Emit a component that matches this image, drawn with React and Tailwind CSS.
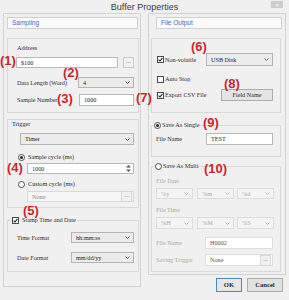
import clsx from "clsx";

const sans = "font-['Liberation_Sans',Arial,sans-serif]";

function Chevron({ color = "#555" }) {
  return (
    <svg width="5" height="3" viewBox="0 0 5 3" className="shrink-0">
      <path d="M0.5 0.5L2.5 2.5L4.5 0.5" fill="none" stroke={color} strokeWidth="0.9" />
    </svg>
  );
}

function Select({ value, className, disabled }) {
  return (
    <div
      className={clsx(
        "flex items-center justify-between border pl-[4px] pr-[3px]",
        disabled ? "border-[#dcdcdc] bg-[#f4f4f4] text-[#a8a8a8]" : "border-[#b4b4b4] bg-[#ebebeb] text-[#222]",
        className
      )}
    >
      <span>{value}</span>
      <Chevron color={disabled ? "#b4b4b4" : "#555"} />
    </div>
  );
}

function Dots({ className }) {
  return (
    <span
      className={clsx(
        "flex h-[11px] w-[11px] shrink-0 items-start justify-center border border-[#c9c9c9] bg-[#f1f1f1] text-[6px] leading-[7px] text-[#777]",
        className
      )}
    >
      ...
    </span>
  );
}

function Field({ value, className, muted, dots }) {
  return (
    <div
      className={clsx(
        "flex items-center justify-between border pl-[4px]",
        muted ? "border-[#d9d9d9] bg-[#f6f6f6] text-[#8c8c8c]" : "border-[#b9b9b9] bg-white text-[#222]",
        className
      )}
    >
      <span>{value}</span>
      {dots && <Dots className="mr-[1px] h-[9px] w-[9px] border-[#d6d6d6]" />}
    </div>
  );
}

function Check({ checked }) {
  return (
    <span className="flex h-[7px] w-[7px] shrink-0 items-center justify-center border border-[#4a4a4a] bg-white">
      {checked && (
        <svg width="5" height="5" viewBox="0 0 5 5">
          <path d="M0.6 2.6L2 4L4.4 0.8" fill="none" stroke="#222" strokeWidth="1.1" />
        </svg>
      )}
    </span>
  );
}

function Radio({ checked }) {
  return (
    <span className="flex h-[7px] w-[7px] shrink-0 items-center justify-center rounded-full border border-[#4a4a4a] bg-white">
      {checked && <span className="h-[3px] w-[3px] rounded-full bg-[#222]" />}
    </span>
  );
}

function Header({ children, className }) {
  return (
    <div
      className={clsx(
        "flex h-[12px] items-center border border-[#d0d0d0] bg-[#fbfbfb] pl-[4px] text-[6.5px] text-[#3d6bb5]",
        sans,
        className
      )}
    >
      {children}
    </div>
  );
}

function Tag({ n, className }) {
  return (
    <span
      className={clsx(
        "absolute text-[13px] font-bold leading-[13px] text-[#c8282d]",
        sans,
        className
      )}
    >
      ({n})
    </span>
  );
}

export default function App() {
  return (
    <div className="relative h-[300px] w-[289px] overflow-hidden bg-[#f0f0f0] font-['Liberation_Serif',serif] text-[6.2px] leading-[8px] text-[#2a2a2a]">
      {/* title bar */}
      <div className={clsx("relative flex h-[13px] items-center justify-center text-[9px] text-[#3a3a3a]", sans)}>
        Buffer Properties
        <span className="absolute right-[6px] top-[1px] flex h-[7px] w-[12px] items-center justify-center bg-[#cdcdcd] text-[6px] leading-none text-white">
          ×
        </span>
      </div>

      <div className="flex pl-[3px]">
        {/* Sampling */}
        <div className="h-[274px] w-[138px] border border-[#d2d2d2] px-[3px] pt-[3px]">
          <Header className="w-[131px]">Sampling</Header>

          <div className="mt-[9px] h-[75px] w-[132px] border border-[#d8d8d8] pl-[8px] pt-[5px]">
            <div className="ml-[1px] h-[8px]">Address</div>
            <div className="mt-[5px] flex h-[11px] items-center">
              <Field value="$100" className="h-[11px] w-[102px]" />
              <Dots className="ml-[5px]" />
            </div>
            <div className="mt-[9px] flex h-[11px] items-center">
              <span className="ml-[1px] w-[61px]">Data Length (Word)</span>
              <Select value="4" className="h-[11px] w-[56px]" />
            </div>
            <div className="mt-[6px] flex h-[12px] items-center">
              <span className="ml-[1px] w-[62px]">Sample Number</span>
              <Field value="1000" className="h-[12px] w-[55px]" />
            </div>
          </div>

          <div className="mt-[6px] h-[89px] w-[132px] border border-[#d8d8d8]">
            <div className="ml-[4px] h-[8px]">Trigger</div>
            <Select value="Timer" className="ml-[12px] mt-[5px] h-[12px] w-[114px]" />
            <div className="ml-[10px] mt-[8px] flex h-[8px] items-center gap-[3px]">
              <Radio checked />
              <span>Sample cycle (ms)</span>
            </div>
            <div className="ml-[19px] mt-[2px] flex h-[11px] w-[107px] items-center justify-between border border-[#b9b9b9] bg-white pl-[4px]">
              <span>1000</span>
              <svg width="7" height="9" viewBox="0 0 7 9" className="mr-[1px]">
                <path d="M3.5 1L6 3.5H1Z" fill="#555" />
                <path d="M3.5 8L6 5.5H1Z" fill="#555" />
              </svg>
            </div>
            <div className="ml-[10px] mt-[6px] flex h-[8px] items-center gap-[3px]">
              <Radio />
              <span>Custom cycle (ms)</span>
            </div>
            <Field value="None" muted dots className="ml-[19px] mt-[3px] h-[11px] w-[107px]" />
          </div>

          <fieldset className="mt-[8px] w-[132px] border border-[#d8d8d8] pb-[8px]">
            <legend className="ml-[4px] flex h-[8px] items-center gap-[3px] pr-[1px]">
              <Check checked />
              <span>Stamp Time and Date</span>
            </legend>
            <div className="mt-[8px] flex h-[11px] items-center">
              <span className="ml-[9px] w-[54px]">Time Format</span>
              <Select value="hh:mm:ss" className="h-[11px] w-[63px]" />
            </div>
            <div className="mt-[9px] flex h-[11px] items-center">
              <span className="ml-[9px] w-[54px]">Date Format</span>
              <Select value="mm/dd/yy" className="h-[11px] w-[63px]" />
            </div>
          </fieldset>
        </div>

        {/* File Output */}
        <div className="ml-[7px] w-[138px]">
          <div className="h-[262px] border border-[#d2d2d2] pt-[3px]">
            <Header className="ml-[7px] w-[126px]">File Output</Header>

            <div className="ml-[2px] mt-[9px] h-[75px] w-[130px] border border-[#d8d8d8] pl-[5px]">
              <div className="mt-[14px] flex h-[13px] items-center">
                <Check checked />
                <span className="ml-[1px] w-[41px]">Non-volatile</span>
                <Select value="USB Disk" className="h-[13px] w-[67px]" />
              </div>
              <div className="mt-[9px] flex h-[8px] items-center">
                <Check />
                <span className="ml-[1px]">Auto Stop</span>
              </div>
              <div className="mt-[6px] flex h-[12px] items-center">
                <Check checked />
                <span className="ml-[1px] w-[56px]">Export CSV File</span>
                <span className="flex h-[12px] w-[52px] items-center justify-center border border-[#adadad] bg-[#e4e4e4]">
                  Field Name
                </span>
              </div>
            </div>

            <fieldset className="ml-[2px] mt-[8px] w-[130px] border border-[#d8d8d8] pb-[11px]">
              <legend className="ml-[2px] flex h-[8px] items-center gap-[1px] pr-[1px]">
                <Radio checked />
                <span>Save As Single</span>
              </legend>
              <div className="mt-[4px] flex h-[12px] items-center">
                <span className="ml-[4px] w-[50px]">File Name</span>
                <Field value="TEST" className="h-[12px] w-[67px]" />
              </div>
            </fieldset>

            <fieldset className="ml-[2px] mt-[5px] w-[130px] border border-[#d8d8d8] pb-[5px]">
              <legend className="ml-[3px] flex h-[8px] items-center gap-[1px] pr-[1px]">
                <Radio />
                <span>Save As Multi</span>
              </legend>
              <div className="ml-[4px] mt-[7px] h-[8px] text-[#aaaaaa]">File Date</div>
              <div className="ml-[4px] mt-[3px] flex h-[11px]">
                <Select disabled value="%y" className="h-[11px] w-[37px]" />
                <Select disabled value="%m" className="ml-[4px] h-[11px] w-[37px]" />
                <Select disabled value="%d" className="ml-[3px] h-[11px] w-[37px]" />
              </div>
              <div className="ml-[4px] mt-[7px] h-[8px] text-[#aaaaaa]">File Time</div>
              <div className="ml-[4px] mt-[3px] flex h-[12px]">
                <Select disabled value="%H" className="h-[12px] w-[37px]" />
                <Select disabled value="%M" className="ml-[4px] h-[12px] w-[37px]" />
                <Select disabled value="%S" className="ml-[3px] h-[12px] w-[37px]" />
              </div>
              <div className="mt-[8px] flex h-[12px] items-center">
                <span className="ml-[4px] w-[49px] text-[#aaaaaa]">File Name</span>
                <Field value="H0002" className="h-[12px] w-[68px] border-[#dedede] bg-[#f8f8f8] text-[#555]" />
              </div>
              <div className="mt-[5px] flex h-[12px] items-center">
                <span className="ml-[4px] w-[49px] text-[#aaaaaa]">Saving Trigger</span>
                <Field value="None" dots className="h-[12px] w-[68px] border-[#dedede] bg-[#f8f8f8] text-[#555]" />
              </div>
            </fieldset>
          </div>

          <div className="mt-[3px] flex justify-end gap-[5px] pr-[3px] text-[6.6px]">
            <span className="flex h-[14px] w-[26px] items-center justify-center border border-[#4a8ac0] bg-[#e6e6e6] font-bold">
              OK
            </span>
            <span className="flex h-[14px] w-[36px] items-center justify-center border border-[#adadad] bg-[#e1e1e1] font-bold">
              Cancel
            </span>
          </div>
        </div>
      </div>

      <Tag n="1" className="left-0 top-[54px]" />
      <Tag n="2" className="left-[63px] top-[66px]" />
      <Tag n="3" className="left-[57px] top-[92px]" />
      <Tag n="4" className="left-[7px] top-[161px]" />
      <Tag n="5" className="left-[23px] top-[204px]" />
      <Tag n="6" className="left-[191px] top-[40px]" />
      <Tag n="7" className="left-[136px] top-[91px]" />
      <Tag n="8" className="left-[224px] top-[77px]" />
      <Tag n="9" className="left-[203px] top-[116px]" />
      <Tag n="10" className="left-[204px] top-[162px]" />
    </div>
  );
}
